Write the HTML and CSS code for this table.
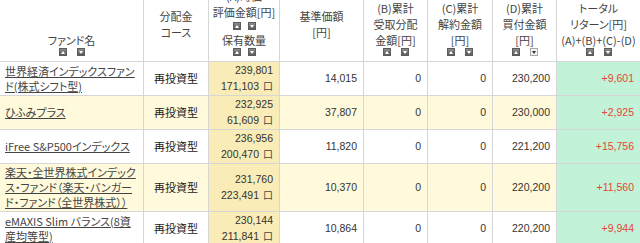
FILE: index.html
```html
<!DOCTYPE html>
<html lang="ja">
<head>
<meta charset="utf-8">
<title>保有投資信託</title>
<link rel="stylesheet" href="styles.css">
</head>
<body>
<table class="funds">
  <colgroup>
    <col class="c-name"><col class="c-course"><col class="c-value"><col class="c-base">
    <col class="c-b"><col class="c-c"><col class="c-d"><col class="c-total">
  </colgroup>
  <thead>
    <tr>
      <th>
        <div class="hl">ファンド名</div>
        <div class="sorts"><span class="sb up"></span><span class="sb down"></span></div>
      </th>
      <th class="h-mid"><div class="hl">分配金</div><div class="hl">コース</div></th>
      <th>
        <div class="hl">(A)時価</div>
        <div class="hl">評価金額[円]</div>
        <div class="sorts tight mid"><span class="sb up"></span><span class="sb down"></span></div>
        <div class="hl">保有数量</div>
        <div class="sorts tight"><span class="sb up"></span><span class="sb down"></span></div>
      </th>
      <th class="h-mid"><div class="hl">基準価額</div><div class="hl">[円]</div></th>
      <th>
        <div class="hl">(B)累計</div><div class="hl">受取分配</div><div class="hl">金額[円]</div>
        <div class="sorts"><span class="sb up"></span><span class="sb down"></span></div>
      </th>
      <th>
        <div class="hl">(C)累計</div><div class="hl">解約金額</div><div class="hl">[円]</div>
        <div class="sorts"><span class="sb up"></span><span class="sb down"></span></div>
      </th>
      <th>
        <div class="hl">(D)累計</div><div class="hl">買付金額</div><div class="hl">[円]</div>
        <div class="sorts"><span class="sb up"></span><span class="sb down active"></span></div>
      </th>
      <th class="h-last">
        <div class="hl">トータル</div><div class="hl">リターン[円]</div><div class="hl">(A)+(B)+(C)-(D)</div>
        <div class="sorts"><span class="sb up"></span><span class="sb down"></span></div>
      </th>
    </tr>
  </thead>
  <tbody>
    <tr>
      <td class="name"><a href="#">世界経済インデックスファン<br>ド(株式シフト型)</a></td>
      <td class="course">再投資型</td>
      <td class="value">239,801<br>171,103<span class="unit">口</span></td>
      <td>14,015</td>
      <td>0</td>
      <td>0</td>
      <td>230,200</td>
      <td class="total">+9,601</td>
    </tr>
    <tr class="alt">
      <td class="name"><a href="#">ひふみプラス</a></td>
      <td class="course">再投資型</td>
      <td class="value">232,925<br>61,609<span class="unit">口</span></td>
      <td>37,807</td>
      <td>0</td>
      <td>0</td>
      <td>230,000</td>
      <td class="total">+2,925</td>
    </tr>
    <tr>
      <td class="name"><a href="#">iFree S&amp;P500インデックス</a></td>
      <td class="course">再投資型</td>
      <td class="value">236,956<br>200,470<span class="unit">口</span></td>
      <td>11,820</td>
      <td>0</td>
      <td>0</td>
      <td>221,200</td>
      <td class="total">+15,756</td>
    </tr>
    <tr class="alt">
      <td class="name"><a href="#">楽天・全世界株式インデック<br>ス・ファンド（楽天・バンガー<br>ド・ファンド（全世界株式））</a></td>
      <td class="course">再投資型</td>
      <td class="value">231,760<br>223,491<span class="unit">口</span></td>
      <td>10,370</td>
      <td>0</td>
      <td>0</td>
      <td>220,200</td>
      <td class="total">+11,560</td>
    </tr>
    <tr>
      <td class="name"><a href="#">eMAXIS Slim バランス(8資<br>産均等型)</a></td>
      <td class="course">再投資型</td>
      <td class="value">230,144<br>211,841<span class="unit">口</span></td>
      <td>10,864</td>
      <td>0</td>
      <td>0</td>
      <td>220,200</td>
      <td class="total">+9,944</td>
    </tr>
  </tbody>
</table>
</body>
</html>
```
FILE: styles.css
```css
html, body {
  margin: 0;
  padding: 0;
  background: #fff;
}

body {
  width: 640px;
  height: 243px;
  overflow: hidden;
}

.funds {
  width: 640px;
  table-layout: fixed;
  border-collapse: separate;
  border-spacing: 0;
  margin-top: -14px;
  color: #333;
}

.c-name { width: 144px; }
.c-course { width: 65px; }
.c-value { width: 71px; }
.c-base { width: 84px; }
.c-b { width: 64px; }
.c-c { width: 65px; }
.c-d { width: 64px; }
.c-total { width: 83px; }

.funds th {
  font-family: "Noto Sans CJK JP", "Noto Sans", sans-serif;
  font-feature-settings: "palt" 1;
  font-size: 11px;
  font-weight: normal;
  color: #444;
  line-height: 16px;
  background: #fff;
  text-align: center;
  vertical-align: bottom;
  padding: 2px 1px 5px;
  border-right: 1px solid #d6d6d6;
  border-bottom: 1px solid #d6d6d6;
  white-space: nowrap;
}

.funds th.h-mid {
  vertical-align: middle;
  padding-top: 5px;
}

.funds th.h-last,
.funds td.total {
  border-right: none;
}

.hl {
  height: 16px;
}

.sorts {
  height: 8px;
  display: flex;
  justify-content: center;
  gap: 10px;
}

.sorts.tight {
  gap: 7px;
}

.sorts.mid {
  margin: 2px 0;
}

.sb {
  width: 8px;
  height: 8px;
  box-sizing: border-box;
  display: inline-flex;
  align-items: center;
  justify-content: center;
  background: linear-gradient(#8c8c8c, #5a5a5a);
  border: 1px solid #5c5c5c;
}

.sb.up::after {
  content: "";
  border-left: 2px solid transparent;
  border-right: 2px solid transparent;
  border-bottom: 3px solid #fff;
}

.sb.down::after {
  content: "";
  border-left: 2px solid transparent;
  border-right: 2px solid transparent;
  border-top: 3px solid #fff;
}

.sb.down.active {
  background: #f2f2f2;
  border-color: #aaa;
}

.sb.down.active::after {
  border-top-color: #333;
}

.funds td {
  font-family: "Liberation Sans", Arial, sans-serif;
  font-size: 10.5px;
  line-height: 15px;
  color: #333;
  text-align: right;
  vertical-align: middle;
  padding: 1px 6px;
  background: #fff;
  border-right: 1px solid #d6d6d6;
  border-bottom: 1px solid #d6d6d6;
  white-space: nowrap;
}

.funds .alt td {
  background: #fffadb;
}

.funds td.name {
  font-family: "Noto Sans CJK JP", "Noto Sans", sans-serif;
  font-feature-settings: "palt" 1;
  font-size: 11px;
  text-align: left;
  padding-left: 5px;
  padding-right: 2px;
}

.funds td.name a {
  color: #444;
  text-decoration: underline;
}

.funds td.course {
  font-family: "Noto Sans CJK JP", "Noto Sans", sans-serif;
  font-size: 11px;
  text-align: center;
  color: #222;
}

.funds td.value {
  background: #faecb6;
  padding-right: 6px;
}

.funds td.total {
  background: #c2f2d7;
  color: #e8443a;
}

.unit {
  font-family: "Noto Sans CJK JP", sans-serif;
  font-size: 10px;
  margin-left: 4px;
  color: #444;
}
```
